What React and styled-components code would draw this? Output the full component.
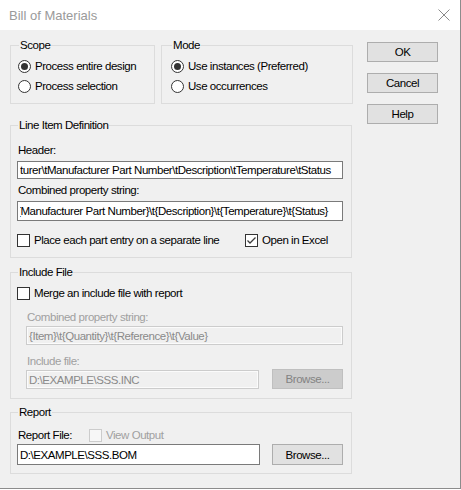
import styled, { createGlobalStyle } from "styled-components";

const Global = createGlobalStyle`
  html, body {
    margin: 0;
    padding: 0;
    background: #ffffff;
  }
  * {
    box-sizing: border-box;
  }
`;

const Screen = styled.div`
  width: 461px;
  height: 490px;
  background: #ffffff;
`;

const Window = styled.div`
  width: 461px;
  height: 489px;
  display: flex;
  flex-direction: column;
  border-right: 1px solid #8c8c8c;
  border-bottom: 1px solid #8c8c8c;
  font-family: "Liberation Sans", Arial, sans-serif;
  font-size: 11.5px;
  letter-spacing: -0.45px;
  color: #000000;
`;

const TitleBar = styled.div`
  height: 30px;
  flex: none;
  display: flex;
  align-items: center;
  justify-content: space-between;
  padding: 0 10px 0 9px;
  background: #ffffff;
  color: #9a9a9a;
  font-size: 13px;
  letter-spacing: 0;
`;

const Body = styled.div`
  flex: 1;
  display: flex;
  gap: 14px;
  padding: 8px 0 0 10px;
  background: #f0f0f0;
`;

const LeftColumn = styled.div`
  width: 343px;
  display: flex;
  flex-direction: column;
`;

const TopRow = styled.div`
  display: flex;
  gap: 6px;
`;

const Group = styled.fieldset`
  margin: ${(p) => p.$top || 0}px 0 0 0;
  width: ${(p) => p.$width || 342}px;
  padding: 0 ${(p) => p.$right || 8}px ${(p) => p.$bottom || 7}px ${(p) => p.$left || 6}px;
  border: 1px solid #dcdcdc;
  display: flex;
  flex-direction: column;
  min-width: 0;
`;

const Legend = styled.legend`
  padding: 0 1px;
  margin-left: 1px;
  line-height: 14px;
  height: 14px;
`;

const Row = styled.label`
  display: flex;
  align-items: center;
  gap: ${(p) => p.$gap || 4}px;
  height: ${(p) => p.$h || 20}px;
  margin-top: ${(p) => p.$mt || 0}px;
  color: ${(p) => (p.$disabled ? "#a0a0a0" : "#000000")};
  white-space: nowrap;
`;

const Radio = styled.span`
  width: 13px;
  height: 13px;
  flex: none;
  border-radius: 50%;
  border: 1px solid #333333;
  background: #ffffff;
  display: flex;
  align-items: center;
  justify-content: center;
  &::after {
    content: "";
    width: 7px;
    height: 7px;
    border-radius: 50%;
    background: ${(p) => (p.$checked ? "#333333" : "transparent")};
  }
`;

const Box = styled.span`
  width: 13px;
  height: 13px;
  flex: none;
  border: 1px solid ${(p) => (p.$disabled ? "#cccccc" : "#333333")};
  background: ${(p) => (p.$disabled ? "#f7f7f7" : "#ffffff")};
  display: flex;
  align-items: center;
  justify-content: center;
`;

const Label = styled.div`
  height: 14px;
  line-height: 14px;
  margin-top: ${(p) => p.$mt || 0}px;
  padding-left: 1px;
  color: ${(p) => (p.$disabled ? "#a0a0a0" : "#000000")};
  white-space: nowrap;
`;

const Field = styled.input`
  display: block;
  width: ${(p) => (p.$width ? `${p.$width}px` : "100%")};
  height: ${(p) => p.$h || 20}px;
  margin: ${(p) => p.$mt || 0}px 0 0 0;
  padding: 0 2px;
  border: 1px solid ${(p) => (p.disabled ? "#cccccc" : "#7a7a7a")};
  box-shadow: ${(p) => (p.disabled ? "inset 0 0 0 1px #fbfbfb" : "none")};
  background: ${(p) => (p.disabled ? "#f0f0f0" : "#ffffff")};
  color: ${(p) => (p.disabled ? "#8a8a8a" : "#000000")};
  -webkit-text-fill-color: ${(p) => (p.disabled ? "#8a8a8a" : "#000000")};
  opacity: 1;
  font: inherit;
  letter-spacing: inherit;
  outline: none;
  text-indent: ${(p) => p.$indent || 0}px;
`;

const Indent = styled.div`
  display: flex;
  flex-direction: column;
  padding-left: 9px;
`;

const FileRow = styled.div`
  display: flex;
  align-items: center;
  justify-content: space-between;
  margin-top: ${(p) => p.$mt || 0}px;
`;

const Button = styled.button`
  width: ${(p) => p.$width || 71}px;
  height: ${(p) => p.$h || 20}px;
  margin: 0;
  padding: 0;
  border: 1px solid ${(p) => (p.disabled ? "#bfbfbf" : "#adadad")};
  background: ${(p) => (p.disabled ? "#cccccc" : "#e1e1e1")};
  color: ${(p) => (p.disabled ? "#838383" : "#000000")};
  font: inherit;
  letter-spacing: inherit;
  flex: none;
`;

const RightColumn = styled.div`
  display: flex;
  flex-direction: column;
  gap: 11px;
  padding-top: 4px;
`;

const ReportHead = styled.div`
  display: flex;
  align-items: center;
  height: 14px;
  margin-top: 9px;
`;

const ReportLabel = styled.div`
  width: 72px;
  padding-left: 1px;
  line-height: 14px;
`;

const Check = () => (
  <svg width="11" height="11" viewBox="0 0 11 11">
    <path d="M1.5 5.5 L4 8 L9.5 2.5" fill="none" stroke="#3b3b3b" strokeWidth="1.3" />
  </svg>
);

const CloseIcon = () => (
  <svg width="12" height="12" viewBox="0 0 12 12">
    <path d="M0.5 0.5 L11.5 11.5 M11.5 0.5 L0.5 11.5" stroke="#8a8a8a" strokeWidth="1" />
  </svg>
);

export default function App() {
  return (
    <Screen>
      <Global />
      <Window>
        <TitleBar>
          <span>Bill of Materials</span>
          <CloseIcon />
        </TitleBar>
        <Body>
          <LeftColumn>
            <TopRow>
              <Group $width={145} $left={7} $bottom={7}>
                <Legend>Scope</Legend>
                <Row $mt={4}>
                  <Radio $checked />
                  Process entire design
                </Row>
                <Row>
                  <Radio />
                  Process selection
                </Row>
              </Group>
              <Group $width={192} $left={9} $bottom={7}>
                <Legend>Mode</Legend>
                <Row $mt={4}>
                  <Radio $checked />
                  Use instances (Preferred)
                </Row>
                <Row>
                  <Radio />
                  Use occurrences
                </Row>
              </Group>
            </TopRow>

            <Group $top={14} $bottom={10}>
              <Legend>Line Item Definition</Legend>
              <Label $mt={11}>Header:</Label>
              <Field
                $mt={4}
                $h={18}
                readOnly
                value={"turer\\tManufacturer Part Number\\tDescription\\tTemperature\\tStatus"}
              />
              <Label $mt={4}>Combined property string:</Label>
              <Field
                $mt={4}
                $indent={-3}
                readOnly
                value={"{Manufacturer Part Number}\\t{Description}\\t{Temperature}\\t{Status}"}
              />
              <FileRow $mt={12}>
                <Row $h={14}>
                  <Box />
                  Place each part entry on a separate line
                </Row>
                <Row $h={14} style={{ width: 98 }}>
                  <Box>
                    <Check />
                  </Box>
                  Open in Excel
                </Row>
              </FileRow>
            </Group>

            <Group $top={7} $bottom={9}>
              <Legend>Include File</Legend>
              <Row $h={14} $mt={7}>
                <Box />
                Merge an include file with report
              </Row>
              <Indent>
                <Label $mt={10} $disabled>
                  Combined property string:
                </Label>
                <Field
                  $mt={2}
                  $h={19}
                  disabled
                  value={"{Item}\\t{Quantity}\\t{Reference}\\t{Value}"}
                />
                <Label $mt={9} $disabled>
                  Include file:
                </Label>
                <FileRow $mt={1}>
                  <Field $width={233} $h={19} $mt={1} disabled value={"D:\\EXAMPLE\\SSS.INC"} />
                  <Button $h={20} disabled>
                    Browse...
                  </Button>
                </FileRow>
              </Indent>
            </Group>

            <Group $top={6} $bottom={8}>
              <Legend>Report</Legend>
              <ReportHead>
                <ReportLabel>Report File:</ReportLabel>
                <Row $h={14} $disabled>
                  <Box $disabled />
                  View Output
                </Row>
              </ReportHead>
              <FileRow $mt={2}>
                <Field $width={243} $h={21} readOnly value={"D:\\EXAMPLE\\SSS.BOM"} />
                <Button $h={21}>Browse...</Button>
              </FileRow>
            </Group>
          </LeftColumn>

          <RightColumn>
            <Button>OK</Button>
            <Button>Cancel</Button>
            <Button>Help</Button>
          </RightColumn>
        </Body>
      </Window>
    </Screen>
  );
}
